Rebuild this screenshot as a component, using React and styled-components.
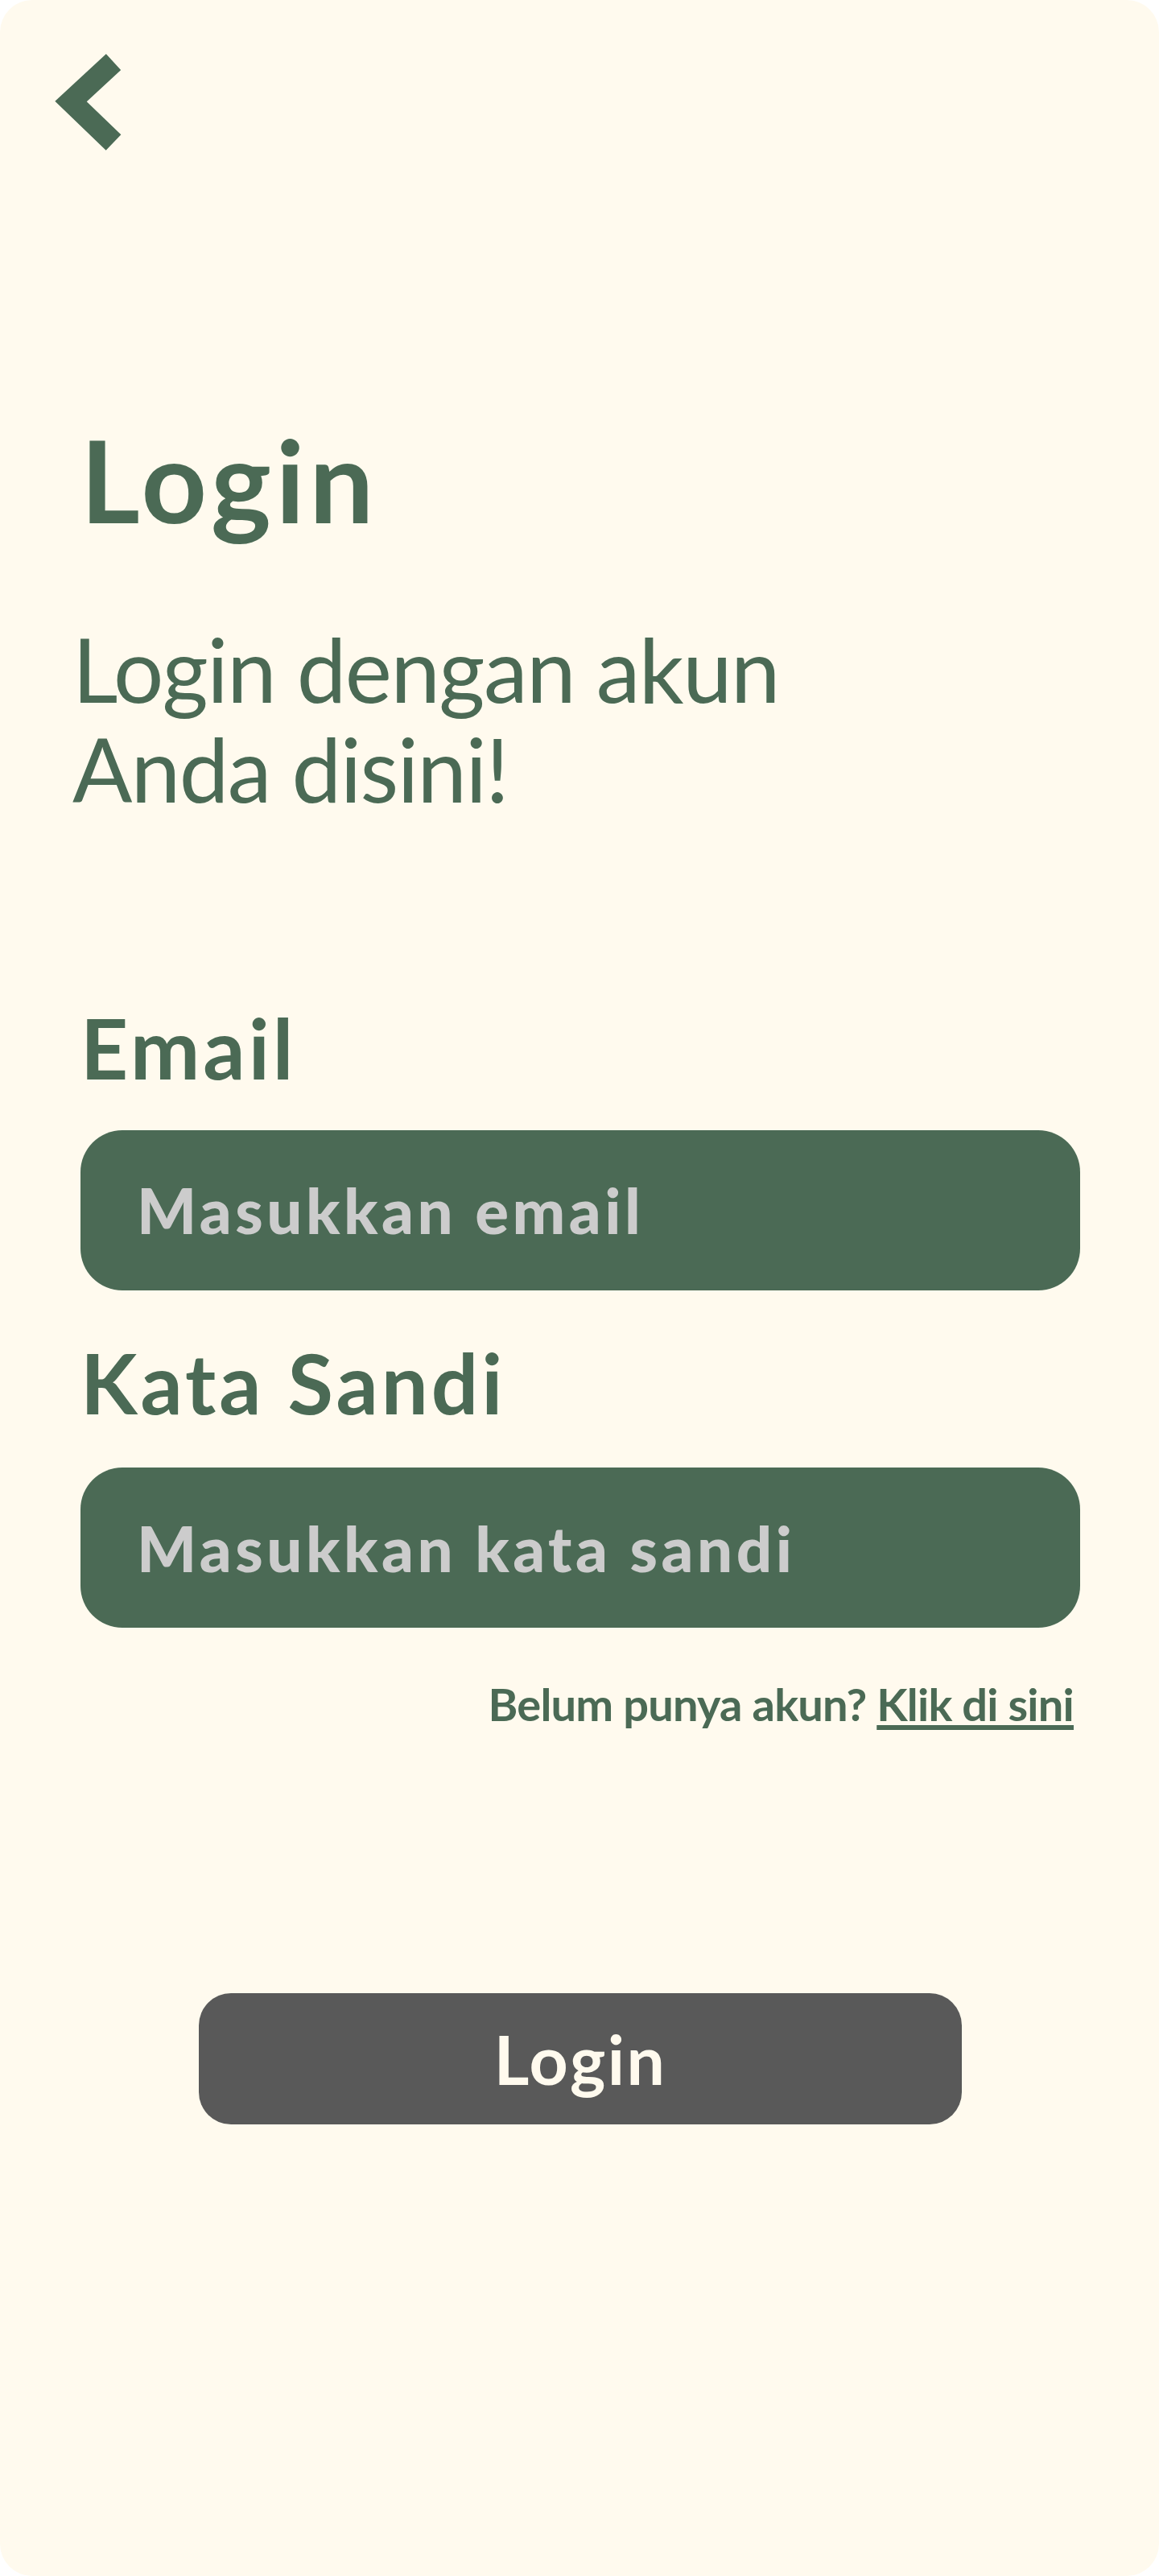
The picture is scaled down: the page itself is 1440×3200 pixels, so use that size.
import React from 'react'
import styled, { createGlobalStyle } from 'styled-components'

const GlobalStyle = createGlobalStyle`
  * {
    box-sizing: border-box;
  }
  body {
    margin: 0;
    background: #ffffff;
    font-family: Lato, "Open Sans", sans-serif;
  }
`

const green = '#4b6a55'
const cream = '#fffaee'

const Screen = styled.div`
  width: 1440px;
  height: 3200px;
  background: ${cream};
  border-radius: 40px;
  overflow: hidden;
  display: flex;
  flex-direction: column;
`

const TopBar = styled.div`
  display: flex;
  padding: 60px 0 0 60px;
`

const BackButton = styled.button`
  display: block;
  width: 100px;
  height: 130px;
  padding: 0;
  border: none;
  background: none;
  cursor: pointer;
`

const Main = styled.main`
  display: flex;
  flex-direction: column;
  padding: 0 98px 0 100px;
`

const Title = styled.h1`
  margin: 334px 0 0;
  font-size: 142px;
  line-height: 142px;
  font-weight: 700;
  letter-spacing: 5.5px;
  color: ${green};
`

const Subtitle = styled.p`
  margin: 102px 0 0 -10px;
  font-size: 110px;
  line-height: 124px;
  font-weight: 400;
  letter-spacing: -1.5px;
  color: ${green};
`

const Label = styled.label`
  display: block;
  margin-top: ${p => p.$gap}px;
  font-size: 103px;
  line-height: 1.2;
  font-weight: 700;
  letter-spacing: 4px;
  color: ${green};
`

const Field = styled.input`
  display: block;
  width: 100%;
  height: 199px;
  margin-top: ${p => p.$gap}px;
  padding: 0 0 0 70px;
  border: none;
  border-radius: 52px;
  background: ${green};
  font-family: Lato, "Open Sans", sans-serif;
  font-size: 78px;
  font-weight: 900;
  letter-spacing: 4.5px;
  color: ${cream};
  outline: none;

  &::placeholder {
    color: #cccccc;
  }
`

const SignupRow = styled.p`
  margin: 61px 0 0;
  padding-right: 8px;
  text-align: right;
  font-size: 56px;
  line-height: 1.2;
  font-weight: 700;
  letter-spacing: -0.8px;
  color: ${green};
`

const SignupLink = styled.a`
  color: ${green};
  text-decoration: underline;
  text-decoration-thickness: 6px;
  text-underline-offset: 5px;
`

const SubmitButton = styled.button`
  display: flex;
  align-items: center;
  justify-content: center;
  width: 948px;
  height: 163px;
  margin: 326px auto 0;
  border: none;
  border-radius: 40px;
  background: #595959;
  font-family: Lato, "Open Sans", sans-serif;
  font-size: 84px;
  font-weight: 700;
  letter-spacing: 2.4px;
  color: ${cream};
  cursor: pointer;
`

function ChevronLeft() {
  return (
    <svg width="100" height="130" viewBox="0 0 100 130">
      <polyline
        points="81,17 28,66 81,117"
        fill="none"
        stroke={green}
        strokeWidth="27"
        strokeLinejoin="miter"
        strokeLinecap="butt"
      />
    </svg>
  )
}

export default function App() {
  return (
    <>
      <GlobalStyle />
      <Screen>
        <TopBar>
          <BackButton aria-label="Kembali">
            <ChevronLeft />
          </BackButton>
        </TopBar>
        <Main>
          <Title>Login</Title>
          <Subtitle>
            Login dengan akun
            <br />
            Anda disini!
          </Subtitle>

          <Label htmlFor="email" $gap={224}>Email</Label>
          <Field id="email" type="email" placeholder="Masukkan email" $gap={40} />

          <Label htmlFor="password" $gap={53}>Kata Sandi</Label>
          <Field id="password" type="password" placeholder="Masukkan kata sandi" $gap={44} />

          <SignupRow>
            Belum punya akun? <SignupLink href="#">Klik di sini</SignupLink>
          </SignupRow>

          <SubmitButton>Login</SubmitButton>
        </Main>
      </Screen>
    </>
  )
}
